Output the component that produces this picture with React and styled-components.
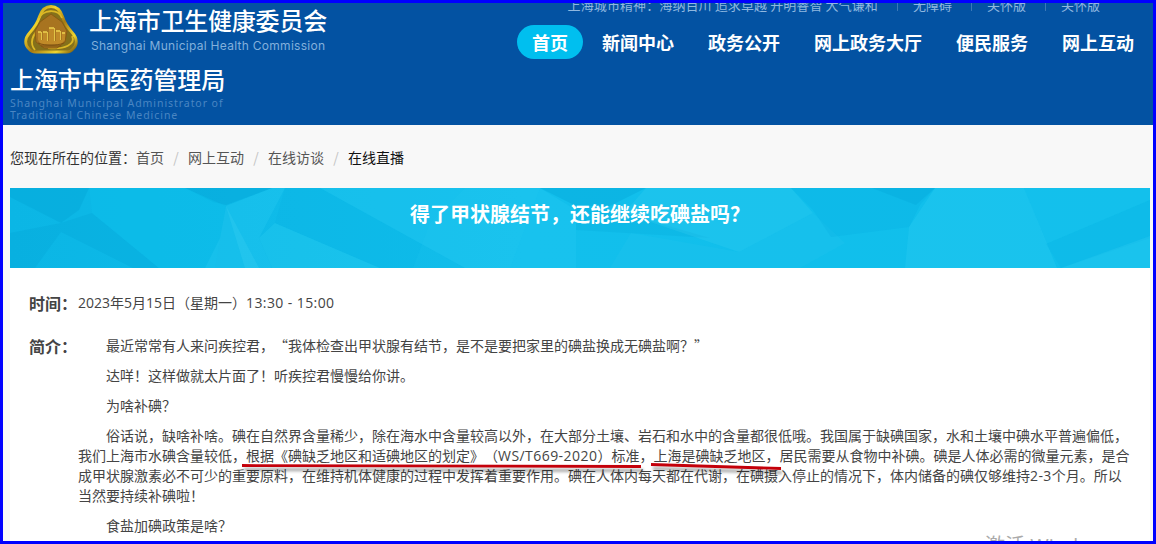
import React from 'react';
import styled, { createGlobalStyle } from 'styled-components';

const GlobalStyle = createGlobalStyle`
	* {
		box-sizing: border-box;
	}

	body {
		margin: 0;
		font-family: "Noto Sans CJK SC", sans-serif;
		font-size: 14px;
		color: #444;
		text-spacing-trim: space-all;
	}
`;

const Page = styled.div`
	position: relative;
	width: 1156px;
	height: 544px;
	overflow: hidden;
	border: 3px solid #0000ff;
	background: #f8f8f8;
`;

/* Header */

const Header = styled.header`
	display: flex;
	justify-content: space-between;
	height: 122px;
	padding: 0 4px 0 7px;
	background: #0352a2;
	color: #fff;
	white-space: nowrap;
`;

const Brand = styled.div`
	display: flex;
	flex-direction: column;
`;

const BrandRow = styled.div`
	display: flex;
	height: 61px;
	padding-left: 14px;
`;

const Emblem = styled.svg`
	width: 54px;
	height: 50px;
	margin-top: 1px;
`;

const BrandText = styled.div`
	padding: 2px 0 0 11px;
`;

const OrgName = styled.div`
	font-size: 24px;
	line-height: 30px;
	font-weight: 500;
	letter-spacing: ${props => props.$spacing || '0'};
`;

const OrgEnglish = styled.div`
	margin: 1px 0 0 2px;
	font-family: Inter, sans-serif;
	font-size: 12px;
	line-height: 20px;
	letter-spacing: 0.28px;
	color: #82b0dc;
`;

const SubEnglish = styled.div`
	margin-top: 3px;
	font-family: "Noto Sans", sans-serif;
	font-size: 10.5px;
	line-height: 12px;
	letter-spacing: 0.94px;
	color: #4a86c2;
`;

const HeaderRight = styled.div`
	display: flex;
	flex-direction: column;
	align-items: flex-end;
`;

const TopBar = styled.div`
	display: flex;
	align-items: center;
	height: 20px;
	margin: -8px 49px 10px 0;
	font-size: 13px;
	color: #8fb8e0;
`;

const TopItem = styled.span`
	line-height: 20px;

	&:first-child {
		letter-spacing: 0.1px;
	}

	& + & {
		display: flex;
		align-items: center;
	}

	& + &::before {
		content: '';
		width: 1px;
		height: 12px;
		margin: 0 15px 0 19px;
		background: #3a78b8;
	}
`;

const Nav = styled.nav`
	display: flex;
	gap: 4px;
`;

const NavItem = styled.a`
	height: 34px;
	padding: 0 15px;
	border-radius: 17px;
	font-size: 18px;
	font-weight: 700;
	line-height: 35px;
	background: ${props => (props.$active ? '#00bfef' : 'transparent')};
`;

/* Breadcrumb */

const Breadcrumb = styled.div`
	display: flex;
	align-items: center;
	height: 63px;
	padding: 0 7px 0;
`;

const Crumb = styled.span`
	line-height: 20px;
	color: ${props => (props.$current ? '#111' : '#555')};
`;

const Slash = styled.span`
	width: 24px;
	line-height: 20px;
	text-align: center;
	color: #c4c4c4;
`;

const CrumbLabel = styled.span`
	color: #333;
	padding-top: 1px;
`;

/* Article */

const Article = styled.main`
	height: 360px;
	margin: 0 3px 0 7px;
	background: #fff;
`;

const Banner = styled.div`
	display: grid;
	height: 80px;
	background: linear-gradient(90deg, #0bb6e5, #12bfec 45%, #10bfeb);

	> * {
		grid-area: 1 / 1;
	}
`;

const Facets = styled.svg`
	width: 1140px;
	height: 80px;
`;

const Title = styled.h1`
	margin: 0;
	padding-top: 11px;
	font-size: 20px;
	line-height: 30px;
	font-weight: 700;
	text-align: center;
	color: #fff;
`;

const Row = styled.div`
	display: flex;
	padding: ${props => props.$top} 0 0 19px;
`;

const Label = styled.div`
	width: 49px;
	font-size: 16px;
	line-height: 22px;
	font-weight: 700;
	color: #444;
`;

const Content = styled.div`
	line-height: 20px;
	white-space: nowrap;
`;

const Paragraph = styled.p`
	margin: 0 0 10px;
	text-indent: 28px;
`;

const Line = styled.span`
	display: block;

	& + & {
		text-indent: 0;
	}
`;

const Latin = styled.span`
	font-family: "Open Sans", sans-serif;
	font-size: 14px;
	line-height: 0;
	letter-spacing: ${props => props.$spacing || '0'};
`;

/* Marks drawn over the page */

const Underlines = styled.svg`
	position: absolute;
	left: 235px;
	top: 455px;
	width: 550px;
	height: 20px;
	pointer-events: none;
`;

const Watermark = styled.div`
	position: absolute;
	left: 982px;
	top: 529px;
	font-family: "Open Sans", "Noto Sans CJK SC", sans-serif;
	font-size: 20px;
	line-height: 28px;
	color: #aaa;
	white-space: nowrap;
`;

const navItems = ['首页', '新闻中心', '政务公开', '网上政务大厅', '便民服务', '网上互动'];
const crumbs = ['首页', '网上互动', '在线访谈', '在线直播'];
const topItems = ['上海城市精神：海纳百川 追求卓越 开明睿智 大气谦和', '无障碍', '关怀版', '关怀版'];

const facets = [
	{ points: '0,0 79,0 69,22 51,35 0,9', fill: '#009fd2', opacity: 0.3 },
	{ points: '0,45 51,35 82,25 149,80 123,80 51,44 25,80 0,80', fill: '#009fd2', opacity: 0.25 },
	{ points: '175,0 262,0 216,17 203,14', fill: '#009fd2', opacity: 0.35 },
	{ points: '79,0 175,0 216,18 205,80 149,80 82,25', fill: '#0bbdea', opacity: 0.5 },
	{ points: '216,18 262,0 275,0 249,50 262,80 195,80 210,50', fill: '#35d2f4', opacity: 0.22 },
	{ points: '216,18 249,80 235,80', fill: '#5ce0f8', opacity: 0.16 },
	{ points: '265,35 370,80 262,80 249,50', fill: '#35d2f4', opacity: 0.25 },
	{ points: '275,0 310,0 455,80 370,80 265,35', fill: '#05aee0', opacity: 0.2 },
	{ points: '310,0 530,0 566,22 566,80 455,80', fill: '#2dccf2', opacity: 0.25 },
	{ points: '420,35 455,0 530,0 500,80 403,80', fill: '#35d2f4', opacity: 0.1 },
	{ points: '530,0 636,0 600,18 566,18', fill: '#009fd2', opacity: 0.3 },
	{ points: '566,18 614,25 700,50 566,42', fill: '#009fd2', opacity: 0.18 },
	{ points: '636,0 781,0 803,25 729,64 614,25', fill: '#40d3f4', opacity: 0.24 },
	{ points: '621,45 729,64 803,25 835,55 790,80 600,80', fill: '#2bcaf0', opacity: 0.2 },
	{ points: '781,0 925,0 910,17 899,39 821,49 803,22', fill: '#05aadd', opacity: 0.22 },
	{ points: '862,0 925,0 906,17', fill: '#009fd2', opacity: 0.25 },
	{ points: '925,0 1014,0 1047,80 895,80 899,39', fill: '#3cd2f4', opacity: 0.22 },
	{ points: '1014,0 1140,0 1140,12 1036,56', fill: '#2bcaf0', opacity: 0.15 },
	{ points: '1036,56 1140,12 1140,50 1051,80', fill: '#05aadd', opacity: 0.15 },
	{ points: '1051,80 1140,48 1140,80', fill: '#40d3f4', opacity: 0.22 },
];

const GoldEmblem = () => (
	<Emblem viewBox="0 0 54 50">
		<defs>
			<linearGradient id="gold" x1="0" y1="0" x2="1" y2="1">
				<stop offset="0" stopColor="#8c6a10" />
				<stop offset="0.3" stopColor="#f3d42c" />
				<stop offset="0.55" stopColor="#a87a12" />
				<stop offset="0.8" stopColor="#f0d62e" />
				<stop offset="1" stopColor="#6f4d0a" />
			</linearGradient>
		</defs>
		<path
			d="M27 2.500c-6 0-9.500 4-11.500 10C13.500 19 10 24 5.500 29c-5 5.500-5 12-0.500 16 2 3 4 3 7 3h30c3 0 5 0 7-3 4.500-4 4.500-10.500-0.500-16-4.500-5-8-10-10-16.500-2-6-5.500-10-11.500-10z"
			fill="#84701b"
			stroke="url(#gold)"
			strokeWidth="2.800"
		/>
		<path d="M15.500 14C18 6 34 4 38 14M11 46c-6-7-3-15 6-24M48 32c4 8-7 14-24 12" fill="none" stroke="#dcb825" strokeWidth="1.800" />
		<path d="M27 10l11 8 5 9-2 11-8 6H20l-8-6-1-11 5-9z" fill="#a87420" stroke="#8a5c12" strokeWidth="1" />
		<path d="M14 28h3v8h2v-8h4v9h2V24h5v13h2V26h4v10h2v-8h3v8l-4 4H17l-3-4z" fill="#c08a28" />
		<path d="M14 28h3M19 28h4M25 24h5M32 27h4M38 29h3" stroke="#ecd04c" strokeWidth="1.400" />
		<path d="M17.500 28v8M23.500 28v9M30.500 24v13M36.500 27v9" stroke="#f0d850" strokeWidth="0.800" />
		<path d="M14 39c8 3 18 3 26 0M17 42h20" fill="none" stroke="#7a5012" strokeWidth="0.900" />
	</Emblem>
);

const App = () => {
	return (
		<Page>
			<GlobalStyle />

			<Header>
				<Brand>
					<BrandRow>
						<GoldEmblem />
						<BrandText>
							<OrgName $spacing="-0.2px">上海市卫生健康委员会</OrgName>
							<OrgEnglish>Shanghai Municipal Health Commission</OrgEnglish>
						</BrandText>
					</BrandRow>
					<OrgName $spacing="-0.1px">上海市中医药管理局</OrgName>
					<SubEnglish>
						Shanghai Municipal Administrator of
						<br />
						Traditional Chinese Medicine
					</SubEnglish>
				</Brand>

				<HeaderRight>
					<TopBar>
						{topItems.map((item, i) => <TopItem key={i}>{item}</TopItem>)}
					</TopBar>
					<Nav>
						{navItems.map((item, i) => <NavItem key={item} $active={i === 0}>{item}</NavItem>)}
					</Nav>
				</HeaderRight>
			</Header>

			<Breadcrumb>
				<CrumbLabel>您现在所在的位置：</CrumbLabel>
				{crumbs.map((item, i) => (
					<React.Fragment key={item}>
						{i > 0 && <Slash>/</Slash>}
						<Crumb $current={i === crumbs.length - 1}>{item}</Crumb>
					</React.Fragment>
				))}
			</Breadcrumb>

			<Article>
				<Banner>
					<Facets viewBox="0 0 1140 80">
						{facets.map((facet, i) => <polygon key={i} {...facet} />)}
					</Facets>
					<Title>得了甲状腺结节，还能继续吃碘盐吗？</Title>
				</Banner>

				<Row $top="24px">
					<Label>时间：</Label>
					<Content>
						<Latin>2023</Latin>年<Latin>5</Latin>月<Latin>15</Latin>日（星期一）<Latin $spacing="0.4px">13:30 - 15:00</Latin>
					</Content>
				</Row>

				<Row $top="21px">
					<Label>简介：</Label>
					<Content>
						<Paragraph>最近常常有人来问疾控君，“我体检查出甲状腺有结节，是不是要把家里的碘盐换成无碘盐啊？”</Paragraph>
						<Paragraph>达咩！这样做就太片面了！听疾控君慢慢给你讲。</Paragraph>
						<Paragraph>为啥补碘？</Paragraph>
						<Paragraph>
							<Line>俗话说，缺啥补啥。碘在自然界含量稀少，除在海水中含量较高以外，在大部分土壤、岩石和水中的含量都很低哦。我国属于缺碘国家，水和土壤中碘水平普遍偏低，</Line>
							<Line>我们上海市水碘含量较低，根据《碘缺乏地区和适碘地区的划定》（<Latin $spacing="0.45px">WS/T669-2020</Latin>）标准，上海是碘缺乏地区，居民需要从食物中补碘。碘是人体必需的微量元素，是合</Line>
							<Line>成甲状腺激素必不可少的重要原料，在维持机体健康的过程中发挥着重要作用。碘在人体内每天都在代谢，在碘摄入停止的情况下，体内储备的碘仅够维持<Latin $spacing="0.4px">2-3</Latin>个月。所以</Line>
							<Line>当然要持续补碘啦！</Line>
						</Paragraph>
						<Paragraph>食盐加碘政策是啥？</Paragraph>
					</Content>
				</Row>
			</Article>

			<Underlines viewBox="0 0 550 20">
				<defs>
					<filter id="soft" x="-5%" y="-200%" width="110%" height="500%">
						<feGaussianBlur stdDeviation="1.5" />
					</filter>
				</defs>
				<path d="M6 11.500L405 12.500M415 10.500L544 14.500" stroke="#000" strokeOpacity="0.35" strokeWidth="3" filter="url(#soft)" />
				<path d="M4 7.500L403 8.500M413 6.500L543 10.500" stroke="#c4000a" strokeWidth="2.800" />
			</Underlines>

			<Watermark>激活 Windows</Watermark>
		</Page>
	);
};

export default App;
